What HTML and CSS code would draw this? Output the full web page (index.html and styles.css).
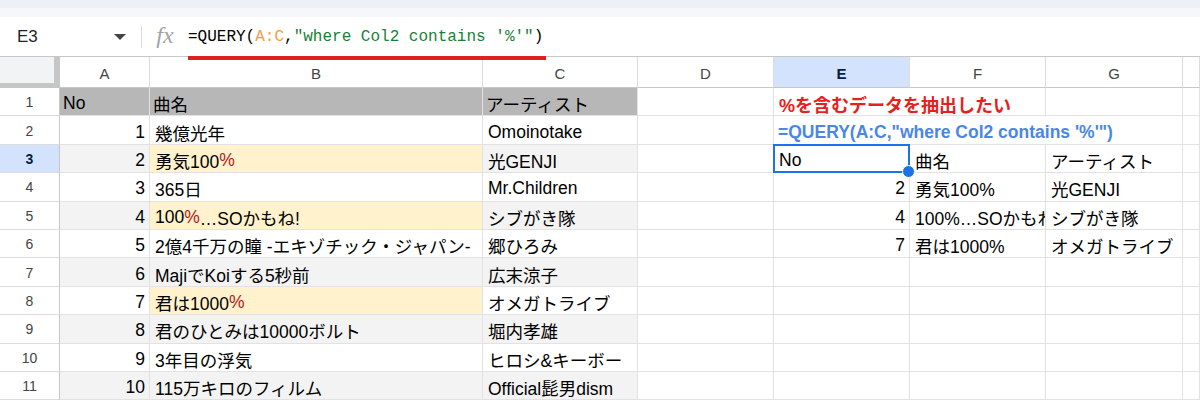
FILE: index.html
```html
<!DOCTYPE html>
<html lang="ja">
<head>
<meta charset="utf-8">
<title>QUERY contains</title>
<link rel="stylesheet" href="styles.css">
</head>
<body>
<div class="app">
  <div class="topband"><div class="band1"></div><div class="band2"></div></div>
  <div class="fbar">
    <div class="namebox"><span class="nb-text">E3</span><span class="nb-arrow"></span></div>
    <div class="fsep"></div>
    <div class="fx">fx</div>
    <div class="formula"><span class="k">=QUERY(</span><span class="rng">A:C</span><span class="k">,</span><span class="str">"where Col2 contains '%'"</span><span class="k">)</span></div>
    <div class="underline"></div>
  </div>
  <div class="grid">
    <div class="corner"></div>
    <div class="ch">A</div><div class="ch">B</div><div class="ch">C</div><div class="ch">D</div><div class="ch ch-sel">E</div><div class="ch">F</div><div class="ch">G</div><div class="ch"></div>

    <div class="rh">1</div>
    <div class="c h1">No</div><div class="c h1">曲名</div><div class="c h1">アーティスト</div><div class="c"></div>
    <div class="c span2 red">%を含むデータを抽出したい</div><div class="c"></div><div class="c"></div>

    <div class="rh">2</div>
    <div class="c r">1</div><div class="c">幾億光年</div><div class="c">Omoinotake</div><div class="c"></div>
    <div class="c span3 blue">=QUERY(A:C,"where Col2 contains '%'")</div><div class="c"></div>

    <div class="rh rh-sel">3</div>
    <div class="c r g">2</div><div class="c y">勇気100<span class="pct">%</span></div><div class="c g">光GENJI</div><div class="c"></div>
    <div class="c sel">No</div><div class="c">曲名</div><div class="c">アーティスト</div><div class="c"></div>

    <div class="rh">4</div>
    <div class="c r">3</div><div class="c">365日</div><div class="c">Mr.Children</div><div class="c"></div>
    <div class="c r">2</div><div class="c">勇気100%</div><div class="c">光GENJI</div><div class="c"></div>

    <div class="rh">5</div>
    <div class="c r g">4</div><div class="c y">100<span class="pct">%</span>…SOかもね!</div><div class="c g">シブがき隊</div><div class="c"></div>
    <div class="c r">4</div><div class="c clip">100%…SOかもね!</div><div class="c">シブがき隊</div><div class="c"></div>

    <div class="rh">6</div>
    <div class="c r">5</div><div class="c">2億4千万の瞳 -エキゾチック・ジャパン-</div><div class="c">郷ひろみ</div><div class="c"></div>
    <div class="c r">7</div><div class="c">君は1000%</div><div class="c">オメガトライブ</div><div class="c"></div>

    <div class="rh">7</div>
    <div class="c r g">6</div><div class="c g">MajiでKoiする5秒前</div><div class="c g">広末涼子</div><div class="c"></div>
    <div class="c"></div><div class="c"></div><div class="c"></div><div class="c"></div>

    <div class="rh">8</div>
    <div class="c r">7</div><div class="c y">君は1000<span class="pct">%</span></div><div class="c">オメガトライブ</div><div class="c"></div>
    <div class="c"></div><div class="c"></div><div class="c"></div><div class="c"></div>

    <div class="rh">9</div>
    <div class="c r g">8</div><div class="c g">君のひとみは10000ボルト</div><div class="c g">堀内孝雄</div><div class="c"></div>
    <div class="c"></div><div class="c"></div><div class="c"></div><div class="c"></div>

    <div class="rh">10</div>
    <div class="c r">9</div><div class="c">3年目の浮気</div><div class="c">ヒロシ&amp;キーボー</div><div class="c"></div>
    <div class="c"></div><div class="c"></div><div class="c"></div><div class="c"></div>

    <div class="rh">11</div>
    <div class="c r g">10</div><div class="c g">115万キロのフィルム</div><div class="c g">Official髭男dism</div><div class="c"></div>
    <div class="c"></div><div class="c"></div><div class="c"></div><div class="c"></div>
  </div>
</div>
</body>
</html>
```

FILE: styles.css
```css
* { box-sizing: border-box; }
html, body { margin: 0; padding: 0; background: #fff; }
body {
  width: 1200px;
  height: 402px;
  overflow: hidden;
  font-family: "Liberation Sans", Arial, "Noto Sans CJK JP", sans-serif;
  color: #000;
}
.app { position: relative; }

.topband { height: 17px; }
.band1 { height: 8px; background: #edf0f5; }
.band2 { height: 9px; background: #f5f7fa; }

.fbar {
  position: relative;
  height: 40px;
  display: flex;
  align-items: center;
  border-bottom: 1px solid #c7c7c7;
}
.namebox {
  width: 141px;
  display: flex;
  align-items: center;
  padding-left: 17px;
  padding-top: 1px;
  font-size: 17px;
  color: #1f1f1f;
}
.nb-text { flex: 1; }
.nb-arrow {
  width: 0; height: 0;
  border-left: 6px solid transparent;
  border-right: 6px solid transparent;
  border-top: 6px solid #444;
  margin-right: 15px;
}
.fsep { width: 1px; height: 22px; background: #dadce0; }
.fx {
  width: 46px;
  text-align: center;
  font-family: "Liberation Serif", serif;
  font-style: italic;
  font-size: 24px;
  color: #a0a4a8;
  margin-top: -3px;
}
.formula {
  font-family: "Liberation Mono", monospace;
  font-size: 16px;
  white-space: pre;
  padding-top: 1px;
}
.formula .k { color: #000; }
.formula .rng { color: #f29e3d; }
.formula .str { color: #188038; }
.underline {
  position: absolute;
  left: 188px;
  top: 39px;
  width: 358px;
  height: 4px;
  background: #e0201e;
  z-index: 5;
}

.grid {
  display: grid;
  grid-template-columns: 60px 90px 333px 155px 136px 136px 136px 137px 1fr;
  grid-template-rows: 31px repeat(11, 28.4px);
}
.corner {
  background: #f1f3f4;
  border-right: 6px solid #c4c7c5;
  border-bottom: 5px solid #c4c7c5;
}
.ch {
  display: flex;
  align-items: center;
  justify-content: center;
  font-size: 15px;
  color: #444;
  border-right: 1px solid #dadce0;
  border-bottom: 1px solid #c7c7c7;
  padding-top: 2px;
}
.ch-sel { background: #d3e3fd; color: #041e49; font-weight: bold; }
.rh {
  display: flex;
  align-items: center;
  justify-content: center;
  font-size: 14px;
  color: #444;
  border-right: 1px solid #c7c7c7;
  border-bottom: 1px solid #dadce0;
  padding-top: 1px;
}
.rh-sel { background: #d3e3fd; color: #041e49; font-weight: bold; }

.c {
  display: flex;
  align-items: center;
  padding: 4px 4px 0 5px;
  font-size: 17.5px;
  white-space: nowrap;
  overflow: hidden;
  border-right: 1px solid #e2e2e2;
  border-bottom: 1px solid #e2e2e2;
  background: #fff;
}
.clip { padding-right: 0; }
.r { justify-content: flex-end; }
.g { background: #f3f3f3; }
.y { background: #fff2cc; }
.h1 { background: #b7b7b7; padding-left: 3px; }
.pct { color: #b8161a; }
.span2 { grid-column: span 2; }
.span3 { grid-column: span 3; }
.red { color: #e8201c; font-weight: bold; font-size: 18px; }
.blue { color: #4a86e8; font-weight: bold; padding-left: 4px; }

.sel { position: relative; overflow: visible; z-index: 3; background: transparent; }
.sel::after {
  content: "";
  position: absolute;
  left: -1px; top: -1px; right: -1px; bottom: -1px;
  border: 2px solid #1a73e8;
}
.sel::before {
  content: "";
  position: absolute;
  right: -6px;
  bottom: -6px;
  width: 11px;
  height: 11px;
  border-radius: 50%;
  background: #1a73e8;
  border: 1px solid #fff;
  z-index: 2;
}
```
